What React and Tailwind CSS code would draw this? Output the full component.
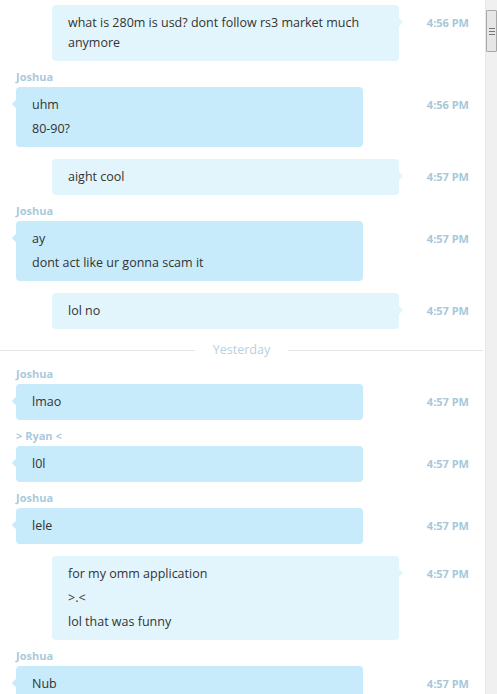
import React from "react";

const font = { fontFamily: '"Open Sans", "Noto Sans", sans-serif' };

function Tail({ out }) {
  return out ? (
    <span className="absolute right-[-3px] top-[14px] h-[6px] w-[6px] rotate-45 rounded-[1px] bg-[#e3f5fc]" />
  ) : (
    <span className="absolute left-[-3px] top-[14px] h-[6px] w-[6px] rotate-45 rounded-[1px] bg-[#c7ebfb]" />
  );
}

function Msg({ from, out, lines, time, mt }) {
  return (
    <div className={mt}>
      {from && (
        <div className="mb-[3px] pl-4 text-[11px] font-bold leading-[14px] text-[#a9cadc]">
          {from}
        </div>
      )}
      <div className="flex items-start pr-4">
        <div
          className={
            out
              ? "relative ml-[52px] flex w-[347px] flex-col gap-1 rounded-[4px] bg-[#e3f5fc] px-4 py-2 text-[12.5px] leading-5 text-[#333333]"
              : "relative ml-4 flex w-[347px] flex-col gap-1 rounded-[4px] bg-[#c7ebfb] px-4 py-2 text-[12.5px] leading-5 text-[#333333]"
          }
        >
          {lines.map((l, i) => (
            <div key={i}>{l}</div>
          ))}
          <Tail out={out} />
        </div>
        <div className="ml-auto pt-2 text-[11px] font-bold leading-5 text-[#a6c8da]">
          {time}
        </div>
      </div>
    </div>
  );
}

export default function App() {
  return (
    <div className="flex h-[694px] w-[497px] overflow-hidden bg-white" style={font}>
      <div className="flex min-w-0 flex-1 flex-col pt-[5px]">
        <Msg
          out
          lines={[
            <>
              what is 280m is usd? dont follow rs3 market much
              <br />
              anymore
            </>,
          ]}
          time="4:56 PM"
        />
        <Msg from="Joshua" mt="mt-[9px]" lines={["uhm", "80-90?"]} time="4:56 PM" />
        <Msg out mt="mt-3" lines={["aight cool"]} time="4:57 PM" />
        <Msg
          from="Joshua"
          mt="mt-[9px]"
          lines={["ay", "dont act like ur gonna scam it"]}
          time="4:57 PM"
        />
        <Msg out mt="mt-3" lines={["lol no"]} time="4:57 PM" />
        <div className="mt-[11px] flex h-5 items-center">
          <div className="h-px flex-1 bg-[#e6e6e6]" />
          <div className="px-[18px] text-[12.5px] leading-5 text-[#b6d2e1]">Yesterday</div>
          <div className="mr-[2px] h-px flex-1 bg-[#e6e6e6]" />
        </div>
        <Msg from="Joshua" mt="mt-[7px]" lines={["lmao"]} time="4:57 PM" />
        <Msg from="> Ryan <" mt="mt-[9px]" lines={["l0l"]} time="4:57 PM" />
        <Msg from="Joshua" mt="mt-[9px]" lines={["lele"]} time="4:57 PM" />
        <Msg
          out
          mt="mt-3"
          lines={["for my omm application", ">.<", "lol that was funny"]}
          time="4:57 PM"
        />
        <Msg from="Joshua" mt="mt-[9px]" lines={["Nub"]} time="4:57 PM" />
      </div>
      <div className="flex h-full w-[12px] shrink-0 flex-col border-l border-[#e8e8e8] bg-[#f0f0f0] pt-[10px]">
        <div className="flex h-[42px] w-full flex-col items-center justify-center gap-[2px] rounded-[1px] border border-[#a8a8a8] bg-[#e6e6e6]">
          <div className="h-px w-[6px] bg-[#777777]" />
          <div className="h-px w-[6px] bg-[#777777]" />
          <div className="h-px w-[6px] bg-[#777777]" />
        </div>
      </div>
    </div>
  );
}
